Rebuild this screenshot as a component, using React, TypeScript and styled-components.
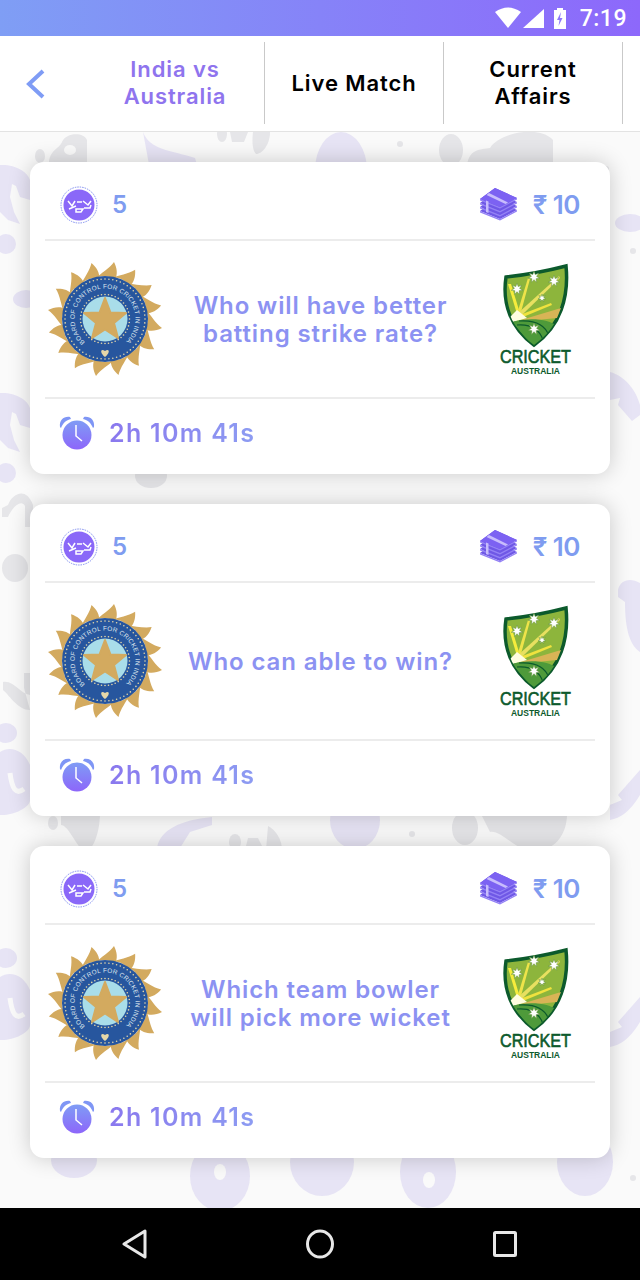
import React from "react";
import styled, { createGlobalStyle } from "styled-components";

const GlobalStyle = createGlobalStyle`
  html, body {
    margin: 0;
    padding: 0;
    background: #000;
  }
  * {
    box-sizing: border-box;
  }
`;

const FONT = `"Inter", "Noto Sans", "Liberation Sans", sans-serif`;

type Question = { id: number; lines: string[] };

const questions: Question[] = [
  { id: 1, lines: ["Who will have better", "batting strike rate?"] },
  { id: 2, lines: ["Who can able to win?"] },
  { id: 3, lines: ["Which team bowler", "will pick more wicket"] },
];

const tabs = [
  { id: "match", lines: ["India vs", "Australia"], active: true },
  { id: "live", lines: ["Live Match"], active: false },
  { id: "affairs", lines: ["Current", "Affairs"], active: false },
];

function StatusIcons() {
  return (
    <svg width="74" height="22" viewBox="0 0 74 22">
      <path d="M1 5 Q14 -4 27 5 L14 21 Z" fill="#fff" />
      <path d="M50 2 V21 H29 Z" fill="#fff" />
      <path d="M60 3 h3 v-2 h6 v2 h3 v19 h-12 Z" fill="#fff" />
      <path d="M67 5 l-4 8 h2.500 l-1 6 l4 -8 h-2.500 l1 -6 Z" fill="#8d78f9" />
    </svg>
  );
}

function BackChevron() {
  return (
    <svg width="22" height="30" viewBox="0 0 22 30">
      <path d="M19 2 L5 15 L19 28" fill="none" stroke="#7f9cf5" strokeWidth="4" />
    </svg>
  );
}

function CoinIcon() {
  return (
    <svg width="38" height="38" viewBox="0 0 38 38">
      <circle cx="19" cy="19" r="18" fill="#fff" stroke="#7f8ef0" strokeWidth="1" strokeDasharray="1.500 1" />
      <circle cx="19" cy="19" r="15.500" fill="#8a68f8" />
      <path
        d="M8 15 l4 5 l3 -5 M17 16 h5 M9 23 l7 -3 M16 23 h7 l-2 3 h-5 Z M23 15 l5 4 l3 -4 M24 22 h6 l1 -3"
        fill="none"
        stroke="#fff"
        strokeWidth="1.500"
      />
    </svg>
  );
}

function MoneyIcon() {
  const layers = [12, 8, 4, 0];
  return (
    <svg width="40" height="33" viewBox="0 0 40 33">
      {layers.map((y) => (
        <g key={y} transform={`translate(0 ${y})`}>
          <path d="M1 11 L16 0 L38 10 L21 19 Z" fill="#6f58e6" />
          <path d="M1 11 L21 19 L38 10 L38 11.500 L21 20.500 L1 12.500 Z" fill="#9482f5" />
        </g>
      ))}
      <path d="M1 11 L16 0 L38 10 L21 19 Z" fill="#7c62f2" />
      <path d="M10 5 L29 14.500 L26.500 16 L7.500 7 Z" fill="#c8bdfc" />
      <path d="M7 24 L9.500 25 L9.500 13.500 L7 12.500 Z" fill="#c8bdfc" />
    </svg>
  );
}

function AlarmIcon({ id }: { id: number }) {
  const gradient = `alarm-${id}`;
  return (
    <svg width="36" height="34" viewBox="0 0 36 34">
      <defs>
        <linearGradient id={gradient} x1="0" y1="0" x2="0" y2="1">
          <stop offset="0" stopColor="#7f9cf5" />
          <stop offset="1" stopColor="#8d66fa" />
        </linearGradient>
      </defs>
      <path d="M1 11 C0 4 5 0 11 1 L12 3 C7 4 4 7 2 12 Z" fill="#7f96f5" />
      <path d="M35 11 C36 4 31 0 25 1 L24 3 C29 4 32 7 34 12 Z" fill="#7f96f5" />
      <circle cx="18" cy="19" r="14.500" fill={`url(#${gradient})`} />
      <path d="M17 9 V20 L23 25" fill="none" stroke="#fff" strokeWidth="1.500" />
    </svg>
  );
}

function BcciEmblem({ id }: { id: number }) {
  const arc = `bcci-arc-${id}`;
  const blades = Array.from({ length: 16 }, (_, i) => (i * 360) / 16);
  const dots = (count: number, r: number, size: number) =>
    Array.from({ length: count }, (_, i) => {
      const a = (i / count) * Math.PI * 2;
      return <circle key={i} cx={58 + r * Math.cos(a)} cy={58 + r * Math.sin(a)} r={size} fill="#e6d7a8" />;
    });
  return (
    <svg width="116" height="116" viewBox="0 0 116 116">
      {blades.map((angle) => (
        <path
          key={angle}
          d="M49 17 C54 12 62 8 67 1 C70 7 71 13 68 19 C62 14 55 14 49 17 Z"
          fill="#d3aa5f"
          transform={`rotate(${angle} 58 58)`}
        />
      ))}
      <circle cx="58" cy="58" r="43" fill="#27569e" />
      {dots(64, 40, 0.8)}
      {dots(44, 24.500, 0.8)}
      <circle cx="58" cy="58" r="22.500" fill="#a9dde9" />
      <path
        d="M58 37 L63.500 51.500 L79 52 L67 62 L71 77 L58 68.500 L45 77 L49 62 L37 52 L52.500 51.500 Z"
        fill="#d3aa5f"
        stroke="#d3aa5f"
        strokeWidth="2"
        strokeLinejoin="round"
      />
      <path d="M58 96 C52 91 54 87 58 90 C62 87 64 91 58 96 Z" fill="#e6d7a8" />
      <defs>
        <path id={arc} d="M38 81 A 30.500 30.500 0 1 1 78 81" />
      </defs>
      <EmblemText>
        <textPath href={`#${arc}`} textLength="146">
          BOARD OF CONTROL FOR CRICKET IN INDIA
        </textPath>
      </EmblemText>
    </svg>
  );
}

function AusLogo({ id }: { id: number }) {
  const clip = `shield-${id}`;
  const stars: [number, number, number][] = [
    [35, 13, 5],
    [55, 17, 5],
    [18, 25, 5],
    [43, 34, 3],
    [35, 65, 5],
  ];
  const starPath = (x: number, y: number, r: number) =>
    Array.from({ length: 14 }, (_, i) => {
      const a = (i * Math.PI) / 7 - Math.PI / 2;
      const d = i % 2 ? r * 0.45 : r;
      return `${i ? "L" : "M"}${(x + d * Math.cos(a)).toFixed(1)} ${(y + d * Math.sin(a)).toFixed(1)}`;
    }).join(" ") + " Z";
  const shield = "M7 13 Q36 10 67 2 C70 32 62 62 35 81 C12 64 3 40 7 13 Z";
  return (
    <svg width="73" height="112" viewBox="0 -1 73 112">
      <defs>
        <clipPath id={clip}>
          <path d={shield} />
        </clipPath>
      </defs>
      <path d={shield} fill="#8db53c" stroke="#0c5a2c" strokeWidth="3.500" />
      <g clipPath={`url(#${clip})`}>
        <path d="M18 50 L9 20 L12 20 L20 46 Z" fill="#f6ec3c" />
        <path d="M18 50 L29 14 L31 15 L22 48 Z" fill="#eee34a" />
        <path d="M18 50 L60 12 L61 14 L24 50 Z" fill="#e8e060" />
        <path d="M18 52 L52 39 L53 41 L24 53 Z" fill="#f0e23e" />
        <path d="M22 56 L62 44 L58 54 L28 57 Z" fill="#d8b456" />
        <path d="M8 56 L18 46 L28 54 L14 58 Z" fill="#fffde0" />
        <path d="M13 58 C30 53 50 55 58 62 L35 84 Z" fill="#4e9a3a" />
        <path d="M20 57 C34 56 46 60 50 72 M18 61 C30 60 40 64 44 76" fill="none" stroke="#0c5a2c" strokeWidth="1.200" />
      </g>
      {stars.map(([x, y, r]) => (
        <path key={`${x}-${y}`} d={starPath(x, y, r + 1)} fill="#fff" stroke="#5f8f35" strokeWidth="0.500" />
      ))}
      <LogoTitle x="1" y="99" textLength="71" lengthAdjust="spacingAndGlyphs">
        CRICKET
      </LogoTitle>
      <LogoSub x="12" y="110" textLength="49" lengthAdjust="spacingAndGlyphs">
        AUSTRALIA
      </LogoSub>
    </svg>
  );
}

// the lavender question-mark shape that repeats down the left edge
function LeftMark({ y }: { y: number }) {
  return (
    <g transform={`translate(0 ${y})`}>
      <ellipse cx="6" cy="10" rx="11" ry="10" fill="#e7e4f5" />
      <path d="M0 29 C10 22 24 27 30 42 L30 77 C30 85 12 93 0 92 Z" fill="#e7e4f5" />
      <path d="M10 50 C12 66 16 72 24 66" fill="none" stroke="#fafafa" strokeWidth="5" />
    </g>
  );
}

function Backdrop() {
  return (
    <BackdropSvg viewBox="0 132 640 1076">
      <g fill="#e7e4f5">
        <path d="M143 132 C150 150 170 150 195 158 L200 175 L150 170 Z" />
        <ellipse cx="341" cy="170" rx="26" ry="38" />
        <path d="M0 165 C15 164 28 172 30 180 L30 200 L20 197 L16 186 L12 184 L10 197 L14 212 L20 224 L8 220 L0 212 Z" />
        <ellipse cx="6" cy="244" rx="10" ry="10" />
        <ellipse cx="26" cy="299" rx="13" ry="9" />
        <path d="M0 393 C15 392 28 400 30 408 L30 428 L20 425 L16 414 L12 412 L10 425 L14 440 L20 452 L8 448 L0 440 Z" />
        <ellipse cx="6" cy="473" rx="10" ry="10" />
        <path d="M157 848 C160 830 180 820 212 817 L212 825 L190 832 L180 848 Z" />
        <ellipse cx="355" cy="820" rx="25" ry="29" />
        <ellipse cx="74" cy="1160" rx="23" ry="18" />
        <ellipse cx="220" cy="1176" rx="30" ry="35" />
        <ellipse cx="322" cy="1162" rx="32" ry="34" />
        <ellipse cx="428" cy="1172" rx="28" ry="36" />
        <ellipse cx="585" cy="1162" rx="28" ry="34" />
        <path d="M610 805 L630 800 L625 812 L610 818 Z" />
        <path d="M610 372 C625 376 636 390 640 405 L640 415 L632 421 L618 405 L620 398 L610 400 Z" />
        <path d="M610 820 L610 805 L622 800 L618 795 L640 770 L640 795 C630 812 620 818 610 820 Z" />
        <path d="M610 1047 L610 1032 L622 1027 L618 1022 L640 997 L640 1022 C630 1039 620 1045 610 1047 Z" />
        <ellipse cx="630" cy="223" rx="15" ry="9" />
        <path d="M618 590 C620 580 630 577 640 583 L640 652 C630 645 625 630 625 602 L618 597 Z" />
      </g>
      <LeftMark y={723} />
      <LeftMark y={948} />
      <g fill="#e6e6e9">
        <ellipse cx="40" cy="156" rx="5" ry="7" />
        <path d="M49 162 C50 150 60 148 62 142 C66 132 84 132 87 140 L87 170 L60 170 Z" />
        <ellipse cx="222" cy="134" rx="5" ry="8" />
        <path d="M230 132 H248 L244 142 H232 Z" />
        <path d="M253 132 H270 C270 145 262 154 256 154 C252 150 252 140 253 132 Z" />
        <circle cx="400" cy="144" r="3" />
        <ellipse cx="451" cy="150" rx="12" ry="16" />
        <path d="M467 165 C470 148 480 150 490 148 C500 132 540 125 553 140 L553 170 L467 170 Z" />
        <circle cx="606" cy="169" r="3" />
        <circle cx="633" cy="251" r="3" />
        <ellipse cx="151" cy="476" rx="16" ry="12" />
        <path d="M2 508 L8 505 C12 494 26 486 33 505 L33 527 L25 527 L25 506 C22 500 14 504 8 517 L2 517 Z" />
        <ellipse cx="15" cy="568" rx="13" ry="14" />
        <path d="M3 682 C14 680 20 694 30 695 L30 673 L24 673 L24 688 L30 710 C18 710 10 696 3 690 Z" />
        <ellipse cx="53" cy="823" rx="5" ry="7" />
        <path d="M61 812 H100 C100 835 92 852 84 852 C76 845 68 825 61 825 Z" />
        <ellipse cx="235" cy="842" rx="6" ry="8" />
        <path d="M245 850 L248 838 L258 838 L264 850 Z" />
        <path d="M266 850 L268 826 C276 830 282 840 282 850 Z" />
        <circle cx="412" cy="834" r="3" />
        <ellipse cx="465" cy="828" rx="13" ry="17" />
        <path d="M482 816 H567 C566 835 555 852 530 852 C510 845 500 830 490 832 Z" />
        <circle cx="633" cy="1178" r="3" />
      </g>
      <g fill="#fafafa">
        <ellipse cx="220" cy="1172" rx="6" ry="8" />
        <ellipse cx="429" cy="1180" rx="6" ry="8" />
        <ellipse cx="70" cy="150" rx="6" ry="5" />
      </g>
    </BackdropSvg>
  );
}

function NavIcons() {
  return (
    <>
      <svg width="26" height="32" viewBox="0 0 26 32">
        <path d="M23 3 V29 L2 16 Z" fill="none" stroke="#e8e8e8" strokeWidth="3" strokeLinejoin="round" />
      </svg>
      <svg width="30" height="32" viewBox="0 0 30 32">
        <ellipse cx="15" cy="16" rx="12.500" ry="13" fill="none" stroke="#e8e8e8" strokeWidth="3" />
      </svg>
      <svg width="26" height="28" viewBox="0 0 26 28">
        <rect x="2.500" y="2.500" width="21" height="23" rx="1" fill="none" stroke="#e8e8e8" strokeWidth="3" />
      </svg>
    </>
  );
}

export default function App() {
  return (
    <Page>
      <GlobalStyle />
      <StatusBar>
        <StatusIcons />
        <Clock>7:19</Clock>
      </StatusBar>
      <TabBar>
        <BackButton>
          <BackChevron />
        </BackButton>
        {tabs.map((tab) => (
          <Tab key={tab.id} $active={tab.active}>
            {tab.lines.map((line) => (
              <span key={line}>{line}</span>
            ))}
          </Tab>
        ))}
      </TabBar>
      <Feed>
        <Backdrop />
        {questions.map((q) => (
          <Card key={q.id}>
            <CardHeader>
              <Stat>
                <CoinIcon />
                <StatValue>5</StatValue>
              </Stat>
              <Stat>
                <MoneyIcon />
                <Prize>₹ 10</Prize>
              </Stat>
            </CardHeader>
            <CardBody>
              <BcciEmblem id={q.id} />
              <QuestionText>
                {q.lines.map((line) => (
                  <span key={line}>{line}</span>
                ))}
              </QuestionText>
              <AusLogo id={q.id} />
            </CardBody>
            <CardFooter>
              <AlarmIcon id={q.id} />
              <Timer>2h 10m 41s</Timer>
            </CardFooter>
          </Card>
        ))}
      </Feed>
      <NavBar>
        <NavIcons />
      </NavBar>
    </Page>
  );
}

const Page = styled.div`
  display: flex;
  flex-direction: column;
  width: 640px;
  height: 1280px;
  overflow: hidden;
  font-family: ${FONT};
`;

const StatusBar = styled.div`
  display: flex;
  justify-content: flex-end;
  align-items: center;
  flex: 0 0 36px;
  gap: 12px;
  padding-right: 13px;
  background: linear-gradient(90deg, #7f9ef5 0%, #8d68fb 100%);
`;

const Clock = styled.span`
  font-family: "Roboto", sans-serif;
  font-size: 23px;
  font-weight: 500;
  letter-spacing: 0.5px;
  color: #fff;
`;

const TabBar = styled.div`
  display: flex;
  align-items: center;
  flex: 0 0 96px;
  background: #fff;
  border-bottom: 1px solid #e3e3e3;
  position: relative;
  z-index: 2;
`;

const BackButton = styled.div`
  display: flex;
  flex: 0 0 86px;
  padding-left: 24px;
`;

const Tab = styled.div<{ $active: boolean }>`
  display: flex;
  flex-direction: column;
  align-items: center;
  justify-content: center;
  flex: 0 0 179px;
  height: 82px;
  margin-bottom: 1px;
  border-right: 1px solid #c9c9c9;
  font-size: 22px;
  font-weight: 600;
  line-height: 27px;
  letter-spacing: 0.9px;
  color: ${({ $active }) => ($active ? "#8f74ee" : "#000")};
`;

const Feed = styled.div`
  display: flex;
  flex-direction: column;
  flex: 1;
  gap: 30px;
  padding: 30px;
  position: relative;
  background: #fafafa;
`;

const BackdropSvg = styled.svg`
  position: absolute;
  top: 0;
  left: 0;
  width: 640px;
  height: 1076px;
`;

const Card = styled.div`
  display: flex;
  flex-direction: column;
  height: 312px;
  position: relative;
  padding: 0 15px;
  background: #fff;
  border-radius: 14px;
  box-shadow: 0 0 22px rgba(0, 0, 0, 0.2);
`;

const CardHeader = styled.div`
  display: flex;
  justify-content: space-between;
  align-items: center;
  flex: 0 0 79px;
  padding: 10px 15px 2px 15px;
  border-bottom: 2px solid #ececec;
`;

const Stat = styled.div`
  display: flex;
  align-items: center;
  gap: 14px;
`;

const StatValue = styled.span`
  font-size: 24px;
  font-weight: 600;
  color: #7f9cf0;
`;

const Prize = styled.span`
  font-size: 26px;
  font-weight: 600;
  letter-spacing: -0.5px;
  color: #7f9cf0;
`;

const CardBody = styled.div`
  display: grid;
  grid-template-columns: 116px 1fr 73px;
  align-items: center;
  flex: 0 0 158px;
  padding: 0 23px 0 2px;
  border-bottom: 2px solid #ececec;
`;

const QuestionText = styled.div`
  display: flex;
  flex-direction: column;
  align-items: center;
  margin: 0 16px 0 -5px;
  padding-top: 2px;
  font-size: 24px;
  font-weight: 600;
  line-height: 28px;
  letter-spacing: 0.9px;
  color: #8c92f2;
`;

const CardFooter = styled.div`
  display: flex;
  align-items: center;
  flex: 1;
  gap: 14px;
  padding: 0 0 8px 14px;
`;

const Timer = styled.span`
  font-size: 25px;
  font-weight: 600;
  letter-spacing: 1.3px;
  background: linear-gradient(90deg, #8a78ee, #8d9cf2);
  -webkit-background-clip: text;
  background-clip: text;
  color: transparent;
`;

const NavBar = styled.div`
  display: flex;
  justify-content: space-between;
  align-items: center;
  flex: 0 0 72px;
  padding: 0 122px;
  background: #000;
`;

const EmblemText = styled.text`
  font-family: "Liberation Sans", sans-serif;
  font-size: 6.4px;
  fill: #dfe6ee;
`;

const LogoTitle = styled.text`
  font-family: "Liberation Sans", sans-serif;
  font-size: 18.4px;
  fill: #0c5a2c;
  stroke: #0c5a2c;
  stroke-width: 0.6px;
`;

const LogoSub = styled.text`
  font-family: "Liberation Sans", sans-serif;
  font-size: 9.5px;
  font-weight: 700;
  fill: #0c5a2c;
`;
